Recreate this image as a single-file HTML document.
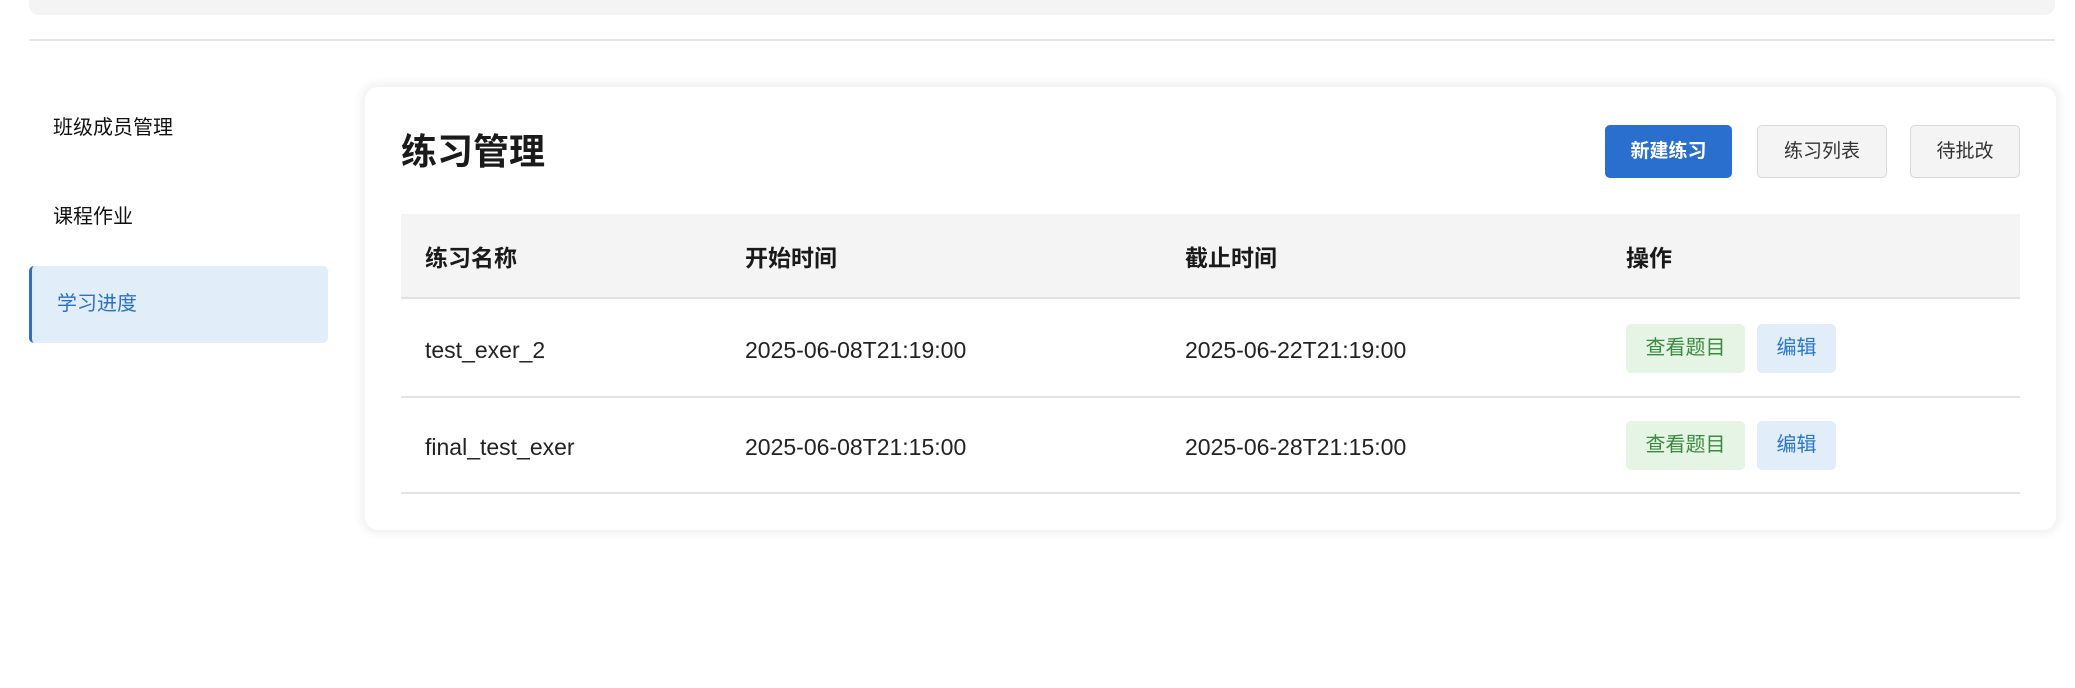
<!DOCTYPE html>
<html><head><meta charset="utf-8"><style>
*{margin:0;padding:0;box-sizing:border-box}
body{width:2075px;height:688px;background:#fff;font-family:"Liberation Sans","Noto Sans CJK SC",sans-serif;color:#222;position:relative;overflow:hidden}
.abs{position:absolute}
.topbar{left:29px;top:-10px;width:2026px;height:25px;background:#f4f4f4;border-radius:10px}
.hline{left:29px;top:39px;width:2026px;height:2px;background:#e6e6e6}
.nav{left:53px;font-size:20px;color:#111;line-height:28px}
.active{left:29px;top:266px;width:299px;height:77px;background:#e1eefa;border-left:3px solid #2a6fce;border-radius:5px;color:#2a6fce;font-size:20px;padding-left:25px;line-height:77px}
.card{left:365px;top:87px;width:1691px;height:443px;background:#fff;border-radius:13px;box-shadow:0 0 8px 5px #f3f3f3}
.title{left:401px;top:128px;font-size:36px;font-weight:bold;line-height:48px;color:#1a1a1a}
.btn{top:125px;height:53px;border-radius:5px;font-size:19px;line-height:51px;text-align:center;border:1px solid #d8d8d8;background:#f4f4f4;color:#333}
.thead{left:401px;top:214px;width:1619px;height:85px;background:#f4f4f4;border-bottom:2px solid #e2e2e2}
.th{font-size:23px;font-weight:bold;top:242px;line-height:32px;color:#1a1a1a}
.row{left:401px;width:1619px;height:2px;background:#e4e4e4}
.td{font-size:23px;line-height:30px;color:#222}
.pill{height:49px;border-radius:5px;font-size:20px;line-height:49px;text-align:center}
.g{background:#e6f4e6;color:#3a8a3e;width:119px;left:1626px}
.b{background:#e1eefa;color:#2a76d2;width:79px;left:1757px}
</style></head><body>
<div class="abs topbar"></div>
<div class="abs hline"></div>
<div class="abs nav" style="top:114px">班级成员管理</div>
<div class="abs nav" style="top:203px">课程作业</div>
<div class="abs active">学习进度</div>
<div class="abs card"></div>
<div class="abs title">练习管理</div>
<div class="abs btn" style="left:1605px;width:127px;background:#2a6fce;border-color:#2a6fce;color:#fff;font-weight:bold">新建练习</div>
<div class="abs btn" style="left:1757px;width:130px">练习列表</div>
<div class="abs btn" style="left:1910px;width:110px">待批改</div>
<div class="abs thead"></div>
<div class="abs th" style="left:425px">练习名称</div>
<div class="abs th" style="left:745px">开始时间</div>
<div class="abs th" style="left:1185px">截止时间</div>
<div class="abs th" style="left:1626px">操作</div>
<div class="abs td" style="left:425px;top:335px">test_exer_2</div>
<div class="abs td" style="left:745px;top:335px">2025-06-08T21:19:00</div>
<div class="abs td" style="left:1185px;top:335px">2025-06-22T21:19:00</div>
<div class="abs pill g" style="top:324px">查看题目</div>
<div class="abs pill b" style="top:324px">编辑</div>
<div class="abs row" style="top:396px"></div>
<div class="abs td" style="left:425px;top:432px">final_test_exer</div>
<div class="abs td" style="left:745px;top:432px">2025-06-08T21:15:00</div>
<div class="abs td" style="left:1185px;top:432px">2025-06-28T21:15:00</div>
<div class="abs pill g" style="top:421px">查看题目</div>
<div class="abs pill b" style="top:421px">编辑</div>
<div class="abs row" style="top:492px"></div>
</body></html>
